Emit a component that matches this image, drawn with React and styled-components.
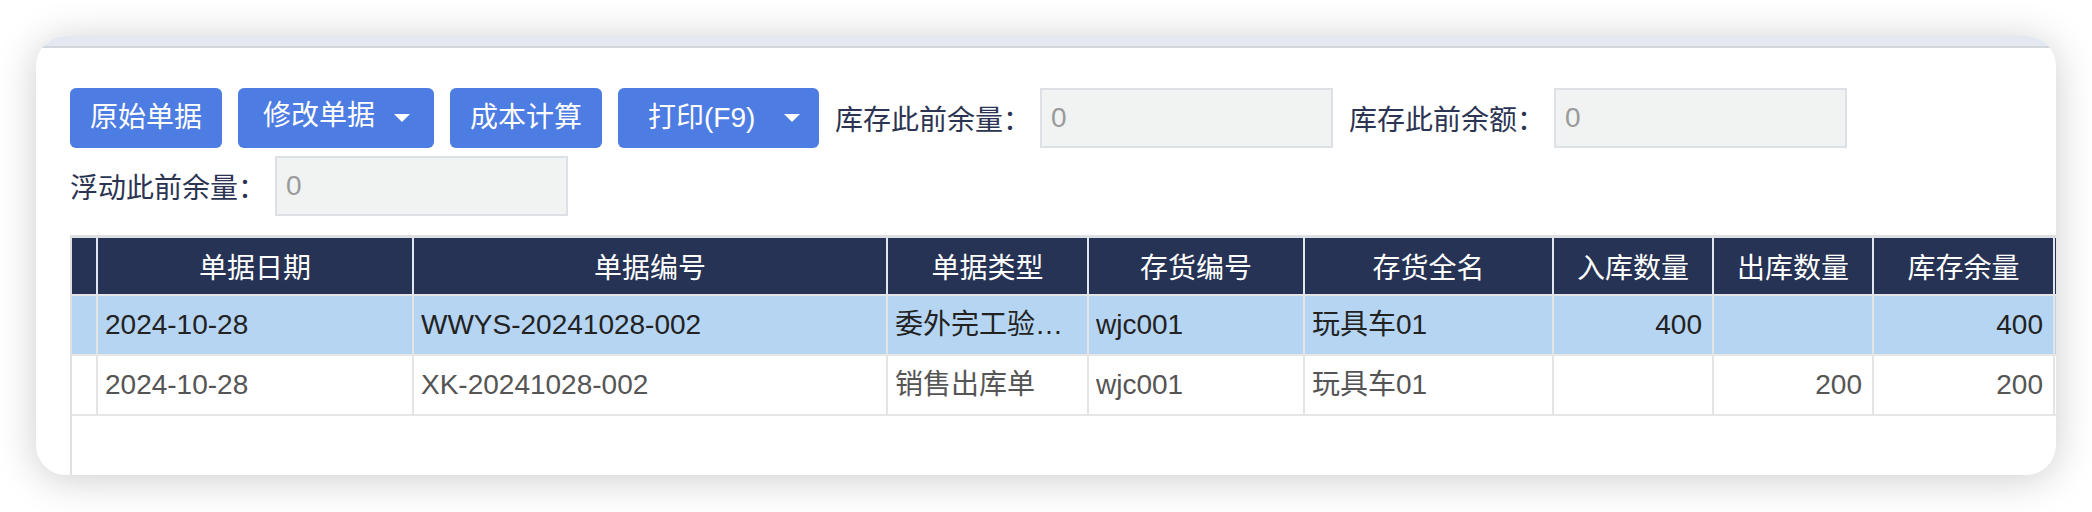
import styled, { createGlobalStyle } from 'styled-components'

const GlobalStyle = createGlobalStyle`
  html, body {
    margin: 0;
    padding: 0;
    background: #ffffff;
  }
  body {
    font-family: "Liberation Sans", "Noto Sans CJK SC", sans-serif;
  }
  * {
    box-sizing: border-box;
  }
`

const COLUMNS = [
  { key: 'gutter', width: 26 },
  { key: 'date', title: '单据日期', width: 316 },
  { key: 'code', title: '单据编号', width: 474 },
  { key: 'type', title: '单据类型', width: 201 },
  { key: 'sku', title: '存货编号', width: 216 },
  { key: 'name', title: '存货全名', width: 249 },
  { key: 'inQty', title: '入库数量', width: 160, align: 'right' },
  { key: 'outQty', title: '出库数量', width: 160, align: 'right' },
  { key: 'stock', title: '库存余量', width: 181, align: 'right' },
  { key: 'stockAmount', title: '库存余额', width: 200, align: 'right' },
]

const ROWS = [
  {
    id: 1,
    selected: true,
    date: '2024-10-28',
    code: 'WWYS-20241028-002',
    type: '委外完工验收单',
    sku: 'wjc001',
    name: '玩具车01',
    inQty: '400',
    outQty: '',
    stock: '400',
    stockAmount: '',
  },
  {
    id: 2,
    selected: false,
    date: '2024-10-28',
    code: 'XK-20241028-002',
    type: '销售出库单',
    sku: 'wjc001',
    name: '玩具车01',
    inQty: '',
    outQty: '200',
    stock: '200',
    stockAmount: '',
  },
]

const gridTemplate = COLUMNS.map(c => `${c.width}px`).join(' ')

const Page = styled.div`
  padding: 36px 36px 0 36px;
  height: 512px;
  overflow: hidden;
`

const Card = styled.div`
  height: 439px;
  background: #ffffff;
  border-radius: 30px;
  overflow: hidden;
  box-shadow: 0 4px 40px rgba(0, 0, 0, 0.2);
`

const TopStrip = styled.div`
  height: 12px;
  background: #e4e9f1;
  border-bottom: 2px solid #d3d7dc;
`

const Content = styled.div`
  padding: 40px 0 0 34px;
`

const Toolbar = styled.div`
  display: flex;
  flex-wrap: wrap;
  align-items: center;
  column-gap: 16px;
  row-gap: 8px;
`

const Button = styled.button`
  display: flex;
  align-items: center;
  justify-content: ${p => (p.$caret ? 'flex-start' : 'center')};
  gap: ${p => p.$gap || 0}px;
  flex: none;
  width: ${p => p.$width}px;
  height: 60px;
  padding: ${p => p.$padding || '0'};
  border: none;
  border-radius: 6px;
  background: #4d7ce3;
  color: #ffffff;
  font-family: "Liberation Sans", "Noto Sans CJK SC", sans-serif;
  font-size: 28px;
  line-height: 1;
  white-space: nowrap;
  cursor: pointer;
`

const ButtonText = styled.span`
  flex: none;
  white-space: nowrap;
  margin-top: ${p => (p.$raised ? '-4px' : '0')};
`

const Caret = styled.span`
  flex: none;
  width: 0;
  height: 0;
  margin-left: auto;
  border-left: 8px solid transparent;
  border-right: 8px solid transparent;
  border-top: 8px solid #ffffff;
`

const Field = styled.div`
  display: flex;
  align-items: center;
  gap: 9px;
`

const Label = styled.span`
  color: #2b3452;
  font-family: "Noto Sans CJK SC", sans-serif;
  font-size: 28px;
  line-height: 1;
  white-space: nowrap;
`

const Input = styled.input`
  width: 293px;
  height: 60px;
  padding: 0 9px;
  border: 2px solid #dde0e4;
  background: #f1f3f2;
  color: #999999;
  font-family: "Liberation Sans", "Noto Sans CJK SC", sans-serif;
  font-size: 28px;
  outline: none;

  &::placeholder {
    color: #9a9a9a;
  }
`

const Table = styled.div`
  margin-top: 19px;
  height: 300px;
  border-top: 3px solid #dcdfe3;
  border-left: 2px solid #e0e0e0;
`

const HeaderRow = styled.div`
  display: grid;
  grid-template-columns: ${gridTemplate};
  height: 58px;
  background: #263354;
  border-bottom: 2px solid #e4e4e4;
`

const HeaderCell = styled.div`
  display: flex;
  align-items: center;
  justify-content: center;
  border-right: 2px solid #e2e6ee;
  color: #ffffff;
  font-family: "Noto Sans CJK SC", sans-serif;
  font-size: 28px;
  line-height: 34px;
  white-space: nowrap;
  overflow: hidden;
`

const Row = styled.div`
  display: grid;
  grid-template-columns: ${gridTemplate};
  height: 60px;
  background: ${p => (p.$selected ? '#b5d5f3' : '#ffffff')};
  color: ${p => (p.$selected ? '#222222' : '#555555')};
  border-bottom: 2px solid #e6e6e6;
`

const Cell = styled.div`
  display: flex;
  align-items: center;
  justify-content: ${p => (p.$align === 'right' ? 'flex-end' : 'flex-start')};
  padding: 0 10px 0 7px;
  border-right: 2px solid #e4e4e4;
  font-size: 28px;
  min-width: 0;
`

const CellText = styled.span`
  display: block;
  line-height: 34px;
  overflow: hidden;
  white-space: nowrap;
  text-overflow: ellipsis;
`

function App() {
  return (
    <Page>
      <GlobalStyle />
      <Card>
        <TopStrip />
        <Content>
          <Toolbar>
            <Button $width={152}>
              <ButtonText>原始单据</ButtonText>
            </Button>
            <Button $width={196} $caret $gap={19} $padding="0 26px 0 25px">
              <ButtonText $raised>修改单据</ButtonText>
              <Caret />
            </Button>
            <Button $width={152}>
              <ButtonText>成本计算</ButtonText>
            </Button>
            <Button $width={201} $caret $gap={29} $padding="0 20px 0 30px">
              <ButtonText>打印(F9)</ButtonText>
              <Caret />
            </Button>
            <Field>
              <Label>库存此前余量：</Label>
              <Input readOnly placeholder="0" />
            </Field>
            <Field>
              <Label>库存此前余额：</Label>
              <Input readOnly placeholder="0" />
            </Field>
            <Field>
              <Label>浮动此前余量：</Label>
              <Input readOnly placeholder="0" />
            </Field>
          </Toolbar>
          <Table>
            <HeaderRow>
              {COLUMNS.map(col => (
                <HeaderCell key={col.key}>{col.title}</HeaderCell>
              ))}
            </HeaderRow>
            {ROWS.map(row => (
              <Row key={row.id} $selected={row.selected}>
                {COLUMNS.map(col => (
                  <Cell key={col.key} $align={col.align}>
                    <CellText>{col.key === 'gutter' ? '' : row[col.key]}</CellText>
                  </Cell>
                ))}
              </Row>
            ))}
          </Table>
        </Content>
      </Card>
    </Page>
  )
}

export default App
